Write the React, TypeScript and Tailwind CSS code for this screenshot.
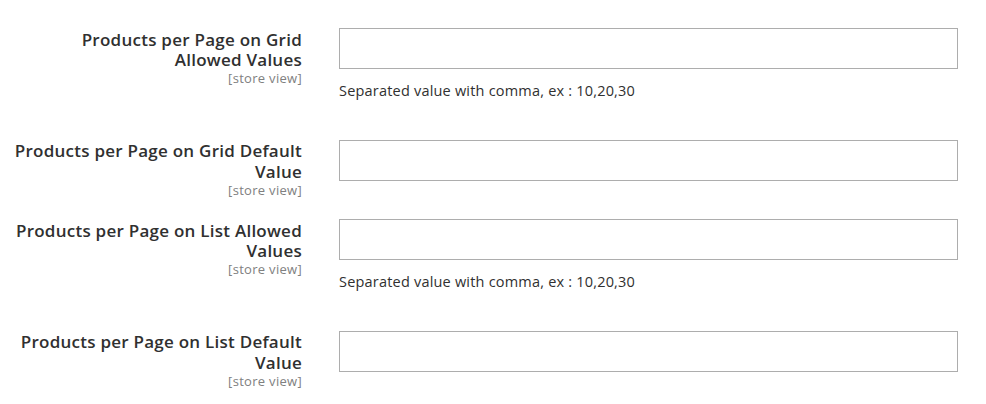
import React from "react";

type Row = { lines: [string, string]; hint?: boolean };

const rows: Row[] = [
  { lines: ["Products per Page on Grid", "Allowed Values"], hint: true },
  { lines: ["Products per Page on Grid Default", "Value"] },
  { lines: ["Products per Page on List Allowed", "Values"], hint: true },
  { lines: ["Products per Page on List Default", "Value"] },
];

export default function App() {
  return (
    <div
      className="w-[986px] h-[404px] bg-white overflow-hidden pt-[28px]"
      style={{ fontFamily: '"Open Sans", "Liberation Sans", sans-serif' }}
    >
      {rows.map((r, i) => (
        <div key={i} className="flex items-start">
          <div className="w-[302px] shrink-0 text-right pt-[1.5px]">
            <label className="block whitespace-nowrap text-[17px] leading-[20.5px] tracking-[0.25px] font-semibold text-[#303030]">
              {r.lines[0]}
              <br />
              {r.lines[1]}
            </label>
            <div className="text-[13px] leading-[16px] -mt-[0.5px] tracking-[0.3px] text-[#808080]">[store view]</div>
          </div>
          <div className="ml-[37px] w-[619px] pb-[38.5px]">
            <div className="h-[41px] border border-[#adadad] bg-white" />
            {r.hint && (
              <div className="mt-[12px] text-[14.5px] leading-[20px] tracking-[0.2px] text-[#303030]">
                Separated value with comma, ex : 10,20,30
              </div>
            )}
          </div>
        </div>
      ))}
    </div>
  );
}
